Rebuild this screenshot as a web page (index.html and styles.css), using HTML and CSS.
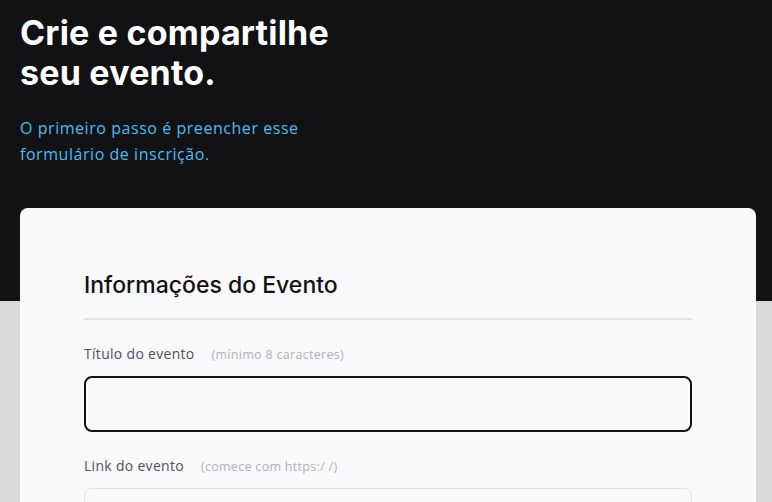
FILE: index.html
```html
<!DOCTYPE html>
<html lang="pt-BR">
<head>
<meta charset="utf-8">
<title>Crie e compartilhe seu evento</title>
<link rel="stylesheet" href="styles.css">
</head>
<body>
<main class="page">
  <header class="hero">
    <h1 class="hero-title">Crie e compartilhe<br>seu evento.</h1>
    <p class="hero-sub">O primeiro passo é preencher esse<br>formulário de inscrição.</p>
  </header>
  <section class="card">
    <h2 class="card-title">Informações do Evento</h2>
    <div class="field">
      <label class="field-label">Título do evento <span class="hint">(mínimo 8 caracteres)</span></label>
      <div class="input input-focus"></div>
    </div>
    <div class="field">
      <label class="field-label">Link do evento <span class="hint">(comece com https:/ /)</span></label>
      <div class="input"></div>
    </div>
  </section>
</main>
</body>
</html>
```
FILE: styles.css
```css
* { box-sizing: border-box; }
html, body { margin: 0; padding: 0; }
body {
  background: #d9d9d9;
  font-family: "Open Sans", "Noto Sans", sans-serif;
}
.page {
  background: linear-gradient(to bottom, #121214 0, #121214 301px, #d9d9d9 301px);
  padding: 0 16px 0 20px;
  min-height: 502px;
}
.hero {
  padding-top: 13px;
}
.hero-title {
  margin: 0;
  font-family: Inter, "Liberation Sans", sans-serif;
  font-weight: 700;
  font-size: 34px;
  line-height: 40px;
  letter-spacing: 0.2px;
  color: #ffffff;
}
.hero-sub {
  margin: 22px 0 0;
  font-size: 16px;
  line-height: 26px;
  letter-spacing: 0.55px;
  color: #48bff2;
}
.card {
  margin-top: 41px;
  background: #f9f9fb;
  border-radius: 8px;
  padding: 61px 64px 0;
  min-height: 300px;
}
.card-title {
  margin: 0;
  padding-bottom: 17px;
  border-bottom: 2px solid #e1e1e6;
  font-family: Inter, "Liberation Sans", sans-serif;
  font-weight: 500;
  font-size: 23px;
  line-height: 32px;
  letter-spacing: 0;
  color: #121214;
}
.field {
  margin-top: 23px;
}
.field-label {
  display: block;
  font-size: 14px;
  line-height: 22px;
  letter-spacing: 0.3px;
  color: #505059;
}
.hint {
  margin-left: 13px;
  font-size: 12.5px;
  letter-spacing: 0.3px;
  color: #b0b0ba;
}
.input {
  margin-top: 10px;
  height: 56px;
  border: 1px solid #e1e1e6;
  border-radius: 8px;
  background: #f9f9fb;
}
.input-focus {
  border: 2px solid #121214;
}
```
